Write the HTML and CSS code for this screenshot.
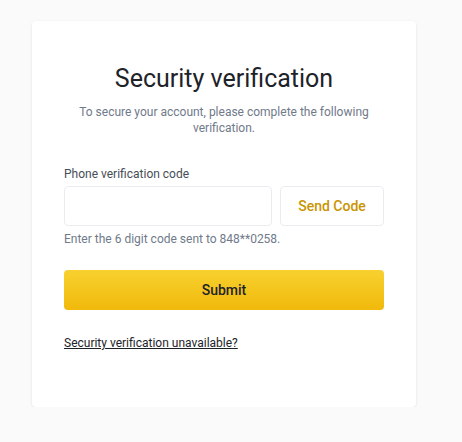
FILE: index.html
```html
<!DOCTYPE html>
<html lang="en">
<head>
<meta charset="utf-8">
<title>Security verification</title>
<link rel="stylesheet" href="styles.css">
</head>
<body>
<div class="page">
  <div class="card">
    <h1 class="title">Security verification</h1>
    <p class="subtitle">To secure your account, please complete the following verification.</p>
    <div class="field">
      <label class="label" for="code">Phone verification code</label>
      <div class="row">
        <input class="input" id="code" type="text">
        <button class="send" type="button">Send Code</button>
      </div>
      <div class="hint">Enter the 6 digit code sent to 848**0258.</div>
    </div>
    <button class="submit" type="button">Submit</button>
    <a class="link" href="#">Security verification unavailable?</a>
  </div>
</div>
</body>
</html>
```

FILE: styles.css
```css
* { box-sizing: border-box; }
html, body {
  margin: 0;
  padding: 0;
  background: #fafafa;
  font-family: Roboto, "Noto Sans", sans-serif;
  color: #1e2329;
}
.page {
  padding: 21px 0 0 32px;
}
.card {
  width: 384px;
  height: 386px;
  background: #fff;
  border-radius: 4px;
  box-shadow: 0 1px 3px rgba(0,0,0,0.10);
  padding: 42px 32px 0;
  display: flex;
  flex-direction: column;
}
.title {
  margin: 0;
  font-size: 25px;
  font-weight: 400;
  line-height: 32px;
  text-align: center;
  color: #1e2329;
}
.subtitle {
  margin: 9px 0 0;
  font-size: 12px;
  line-height: 16px;
  text-align: center;
  color: #707a8a;
  padding: 0 8px;
}
.field {
  margin-top: 30px;
  display: flex;
  flex-direction: column;
}
.label {
  font-size: 12px;
  line-height: 16px;
  color: #474d57;
  margin-bottom: 4px;
}
.row {
  display: flex;
  gap: 8px;
}
.input {
  flex: 1 1 0;
  min-width: 0;
  width: 0;
  height: 40px;
  border: 1px solid #eaecef;
  border-radius: 4px;
  outline: none;
  font: inherit;
  padding: 0 12px;
  background: #fff;
}
.send {
  flex: 0 0 104px;
  height: 40px;
  border: 1px solid #eaecef;
  border-radius: 4px;
  background: #fff;
  color: #c99400;
  font-family: inherit;
  font-size: 14px;
  font-weight: 500;
  cursor: pointer;
  white-space: nowrap;
}
.hint {
  margin-top: 5px;
  font-size: 12px;
  line-height: 16px;
  color: #707a8a;
}
.submit {
  margin-top: 23px;
  height: 40px;
  border: none;
  border-radius: 4px;
  background: linear-gradient(180deg, #f8d12f 0%, #f0b90b 100%);
  color: #1e2329;
  font-family: inherit;
  font-size: 14px;
  font-weight: 500;
  cursor: pointer;
}
.link {
  margin-top: 25px;
  align-self: flex-start;
  font-size: 12px;
  line-height: 16px;
  color: #1e2329;
  text-decoration: underline;
}
```
